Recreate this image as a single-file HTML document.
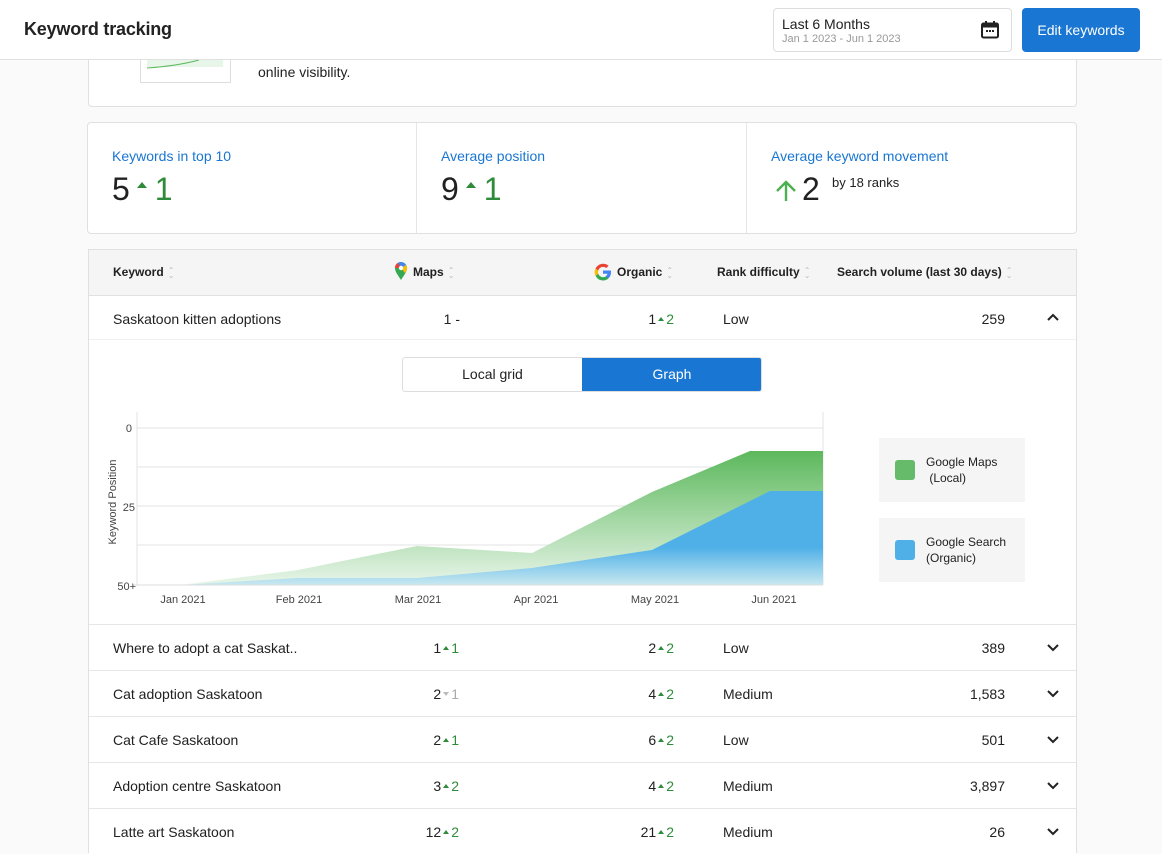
<!DOCTYPE html>
<html><head><meta charset="utf-8"><style>
*{box-sizing:border-box;margin:0;padding:0}
body{width:1162px;height:852px;overflow:hidden;background:#fafafa;font-family:"Liberation Sans",Arial,sans-serif;color:#212121;position:relative}
.a{position:absolute}
.hdr{left:0;top:0;width:1162px;height:60px;background:#fff;border-bottom:1px solid #e0e0e0;z-index:5}
.card{background:#fff;border:1px solid #e0e0e0;border-radius:4px}
.up{color:#2e8b3a}
.tri{display:inline-block;width:0;height:0;border-left:5px solid transparent;border-right:5px solid transparent;border-bottom:6px solid #2e8b3a;vertical-align:middle;margin:0 8px 14px 7px}
.tris{display:inline-block;width:0;height:0;border-left:3px solid transparent;border-right:3px solid transparent;border-bottom:4px solid #2e8b3a;vertical-align:middle;margin:0 2px 3px}
.trid{display:inline-block;width:0;height:0;border-left:3px solid transparent;border-right:3px solid transparent;border-top:4px solid #bbb;vertical-align:middle;margin:0 2px 3px}
.row{position:absolute;left:89px;width:987px;height:46px;border-top:1px solid #e6e6e6;background:#fff;font-size:14px}
.row>span{position:absolute;top:15px;white-space:nowrap}
.kw{left:24px}
.mp{right:617px;text-align:right}
.og{right:402px;text-align:right}
.rd{left:634px}
.vol{right:71px}
.th{font-size:12px;font-weight:bold;position:absolute;top:15px}
.sort{display:inline-block;color:#bbb;font-size:8px;line-height:5px;vertical-align:middle;margin-left:4px;font-weight:normal}
.stat{position:absolute;top:0;height:110px}
.stat .l{position:absolute;left:24px;top:25px;color:#1976d2;font-size:14px}
.stat .v{position:absolute;left:24px;top:48px;font-size:32px;white-space:nowrap}
</style></head><body>
<div class="a hdr">
 <div class="a" style="left:24px;top:19px;font-size:18px;font-weight:bold;color:#222;letter-spacing:-0.2px">Keyword tracking</div>
 <div class="a" style="left:773px;top:8px;width:239px;height:44px;border:1px solid #ddd;border-radius:4px">
  <div class="a" style="left:8px;top:7px;font-size:14px">Last 6 Months</div>
  <div class="a" style="left:8px;top:24px;font-size:11px;color:#999">Jan 1 2023 - Jun 1 2023</div>
  <svg class="a" style="left:206px;top:11px" width="20" height="20" viewBox="0 0 20 20"><rect x="2" y="3.5" width="16" height="14" rx="1.5" fill="none" stroke="#222" stroke-width="2"/><rect x="2" y="3.5" width="16" height="4" fill="#222"/><rect x="5" y="1" width="2" height="4" fill="#222"/><rect x="13" y="1" width="2" height="4" fill="#222"/><rect x="6" y="10" width="2" height="2" fill="#222"/><rect x="9" y="10" width="2" height="2" fill="#222"/><rect x="12" y="10" width="2" height="2" fill="#222"/></svg>
 </div>
 <div class="a" style="left:1022px;top:8px;width:118px;height:44px;background:#1976d2;border-radius:4px;color:#fff;font-size:14px;text-align:center;line-height:44px">Edit keywords</div>
</div>

<div class="a card" style="left:88px;top:40px;width:989px;height:67px;border-top:none;border-radius:0 0 4px 4px">
 <div class="a" style="left:51px;top:0;width:91px;height:43px;border:1px solid #ddd;border-top:none;background:#fff">
  <div class="a" style="left:6px;top:0;width:76px;height:27px;background:#e8f5e9"></div>
  <svg class="a" style="left:6px;top:0" width="76" height="30"><path d="M0 28 Q30 26 52 20" stroke="#5cb85c" fill="none" stroke-width="1"/></svg>
 </div>
 <div class="a" style="left:169px;top:24px;font-size:14px">online visibility.</div>
</div>

<div class="a card" style="left:87px;top:122px;width:990px;height:112px">
 <div class="stat" style="left:0;width:329px;border-right:1px solid #e6e6e6"><div class="l">Keywords in top 10</div><div class="v">5<span class="tri"></span><span class="up">1</span></div></div>
 <div class="stat" style="left:329px;width:330px;border-right:1px solid #e6e6e6"><div class="l">Average position</div><div class="v">9<span class="tri"></span><span class="up">1</span></div></div>
 <div class="stat" style="left:659px;width:330px"><div class="l">Average keyword movement</div>
  <svg class="a" style="left:27px;top:56px" width="24" height="24" viewBox="0 0 24 24"><path d="M12 22V3M3 12l9-9 9 9" stroke="#4caf50" stroke-width="2.4" fill="none"/></svg>
  <div class="a" style="left:55px;top:48px;font-size:32px">2</div>
  <div class="a" style="left:85px;top:52px;font-size:13px">by 18 ranks</div>
 </div>
</div>

<div class="a" style="left:88px;top:249px;width:989px;height:604px;border:1px solid #e0e0e0;background:#fff"></div>
<div class="a" style="left:89px;top:250px;width:987px;height:46px;background:#f5f5f5;border-bottom:1px solid #e0e0e0">
 <span class="th" style="left:24px">Keyword<span class="sort">⌃<br>⌄</span></span>
 <svg class="a" style="left:305px;top:11px" width="14" height="20" viewBox="0 0 14 20"><path d="M7 19C4 14 1 11 1 7a6 6 0 0 1 12 0c0 4-3 7-6 12z" fill="#34a853"/><path d="M1 7a6 6 0 0 1 3-5.2L7 7z" fill="#ea4335"/><path d="M4 1.8A6 6 0 0 1 12 4L7 7z" fill="#4285f4"/><path d="M12 4a6 6 0 0 1 1 3c0 2-1 4-2 5L7 7z" fill="#fbbc04"/><circle cx="7" cy="7" r="2.2" fill="#fff"/></svg>
 <span class="th" style="left:324px">Maps<span class="sort">⌃<br>⌄</span></span>
 <svg class="a" style="left:505px;top:13px" width="18" height="18" viewBox="0 0 18 18"><path d="M17 9.2c0-.6 0-1.2-.2-1.7H9v3.3h4.5a4 4 0 0 1-1.7 2.5v2h2.7c1.6-1.5 2.5-3.6 2.5-6.1z" fill="#4285f4"/><path d="M9 17.5c2.3 0 4.2-.8 5.5-2.1l-2.7-2c-.7.5-1.7.8-2.8.8-2.2 0-4-1.5-4.7-3.4H1.6v2.1A8.5 8.5 0 0 0 9 17.5z" fill="#34a853"/><path d="M4.3 10.8a5 5 0 0 1 0-3.3V5.4H1.6a8.5 8.5 0 0 0 0 7.6z" fill="#fbbc05"/><path d="M9 3.9c1.2 0 2.3.4 3.2 1.2l2.4-2.4A8.5 8.5 0 0 0 1.6 5.4l2.7 2.1C5 5.4 6.8 3.9 9 3.9z" fill="#ea4335"/></svg>
 <span class="th" style="left:528px">Organic<span class="sort">⌃<br>⌄</span></span>
 <span class="th" style="left:628px">Rank difficulty<span class="sort">⌃<br>⌄</span></span>
 <span class="th" style="left:748px">Search volume (last 30 days)<span class="sort">⌃<br>⌄</span></span>
</div>

<div class="row" style="top:296px;height:44px;border-top:none;border-bottom:1px solid #f0f0f0"><span class="kw">Saskatoon kitten adoptions</span><span class="mp" style="right:616px">1 -</span><span class="og">1<span class="tris"></span><span class="up">2</span></span><span class="rd">Low</span><span class="vol">259</span><svg class="a" style="left:958px;top:17px" width="12" height="8"><path d="M1 7l5-5 5 5" stroke="#222" stroke-width="2" fill="none"/></svg></div>

<div class="a" style="left:402px;top:357px;width:360px;height:35px;border:1px solid #ddd;border-radius:3px;overflow:hidden;font-size:14px">
 <div class="a" style="left:0;top:0;width:179px;height:33px;text-align:center;line-height:33px">Local grid</div>
 <div class="a" style="left:179px;top:0;width:180px;height:33px;background:#1976d2;color:#fff;text-align:center;line-height:33px">Graph</div>
</div>

<svg class="a" style="left:95px;top:405px" width="740" height="210">
 <defs>
  <linearGradient id="g" x1="0" y1="0" x2="0" y2="1"><stop offset="0" stop-color="#5cb85c"/><stop offset="1" stop-color="#e8f5e9"/></linearGradient>
  <linearGradient id="b" x1="0" y1="0" x2="0" y2="1"><stop offset="0.6" stop-color="#4fb0e8"/><stop offset="1" stop-color="#c8e8f0"/></linearGradient>
 </defs>
 <g stroke="#e3e3e3" stroke-width="1">
  <line x1="42" y1="23" x2="728" y2="23"/><line x1="42" y1="62" x2="728" y2="62"/><line x1="42" y1="101" x2="728" y2="101"/><line x1="42" y1="140" x2="728" y2="140"/>
  <line x1="42" y1="7" x2="42" y2="180"/><line x1="728" y1="7" x2="728" y2="180"/>
 </g>
 <path d="M85 180L203 165L322 141L437 148L557 87L655 46L728 46L728 180Z" fill="url(#g)"/>
 <path d="M85 180L203 173L322 173L437 163L557 145L675 86L728 86L728 180Z" fill="url(#b)"/>
 <line x1="38" y1="180" x2="728" y2="180" stroke="#ddd"/>
 <g font-size="11" fill="#444" font-family="Liberation Sans,sans-serif">
  <text x="37" y="27" text-anchor="end">0</text><text x="40" y="106" text-anchor="end">25</text><text x="41" y="185" text-anchor="end">50+</text>
  <g text-anchor="middle"><text x="88" y="198">Jan 2021</text><text x="204" y="198">Feb 2021</text><text x="323" y="198">Mar 2021</text><text x="441" y="198">Apr 2021</text><text x="560" y="198">May 2021</text><text x="679" y="198">Jun 2021</text></g>
  <text transform="translate(21,97) rotate(-90)" text-anchor="middle">Keyword Position</text>
 </g>
</svg>

<div class="a" style="left:879px;top:438px;width:146px;height:64px;background:#f5f5f5;font-size:12px">
 <div class="a" style="left:16px;top:22px;width:20px;height:20px;background:#66bb6a;border-radius:3px"></div>
 <div class="a" style="left:47px;top:16px;line-height:16px">Google Maps<br>&nbsp;(Local)</div>
</div>
<div class="a" style="left:879px;top:518px;width:146px;height:64px;background:#f5f5f5;font-size:12px">
 <div class="a" style="left:16px;top:22px;width:20px;height:20px;background:#4fb0e8;border-radius:3px"></div>
 <div class="a" style="left:47px;top:16px;line-height:16px">Google Search<br>(Organic)</div>
</div>

<div class="row" style="top:624px"><span class="kw">Where to adopt a cat Saskat..</span><span class="mp">1<span class="tris"></span><span class="up">1</span></span><span class="og">2<span class="tris"></span><span class="up">2</span></span><span class="rd">Low</span><span class="vol">389</span><svg class="a" style="left:958px;top:19px" width="12" height="8"><path d="M1 1l5 5 5-5" stroke="#222" stroke-width="2" fill="none"/></svg></div>
<div class="row" style="top:670px"><span class="kw">Cat adoption Saskatoon</span><span class="mp">2<span class="trid"></span><span style="color:#aaa">1</span></span><span class="og">4<span class="tris"></span><span class="up">2</span></span><span class="rd">Medium</span><span class="vol">1,583</span><svg class="a" style="left:958px;top:19px" width="12" height="8"><path d="M1 1l5 5 5-5" stroke="#222" stroke-width="2" fill="none"/></svg></div>
<div class="row" style="top:716px"><span class="kw">Cat Cafe Saskatoon</span><span class="mp">2<span class="tris"></span><span class="up">1</span></span><span class="og">6<span class="tris"></span><span class="up">2</span></span><span class="rd">Low</span><span class="vol">501</span><svg class="a" style="left:958px;top:19px" width="12" height="8"><path d="M1 1l5 5 5-5" stroke="#222" stroke-width="2" fill="none"/></svg></div>
<div class="row" style="top:762px"><span class="kw">Adoption centre Saskatoon</span><span class="mp">3<span class="tris"></span><span class="up">2</span></span><span class="og">4<span class="tris"></span><span class="up">2</span></span><span class="rd">Medium</span><span class="vol">3,897</span><svg class="a" style="left:958px;top:19px" width="12" height="8"><path d="M1 1l5 5 5-5" stroke="#222" stroke-width="2" fill="none"/></svg></div>
<div class="row" style="top:808px"><span class="kw">Latte art Saskatoon</span><span class="mp">12<span class="tris"></span><span class="up">2</span></span><span class="og">21<span class="tris"></span><span class="up">2</span></span><span class="rd">Medium</span><span class="vol">26</span><svg class="a" style="left:958px;top:19px" width="12" height="8"><path d="M1 1l5 5 5-5" stroke="#222" stroke-width="2" fill="none"/></svg></div>
</body></html>
